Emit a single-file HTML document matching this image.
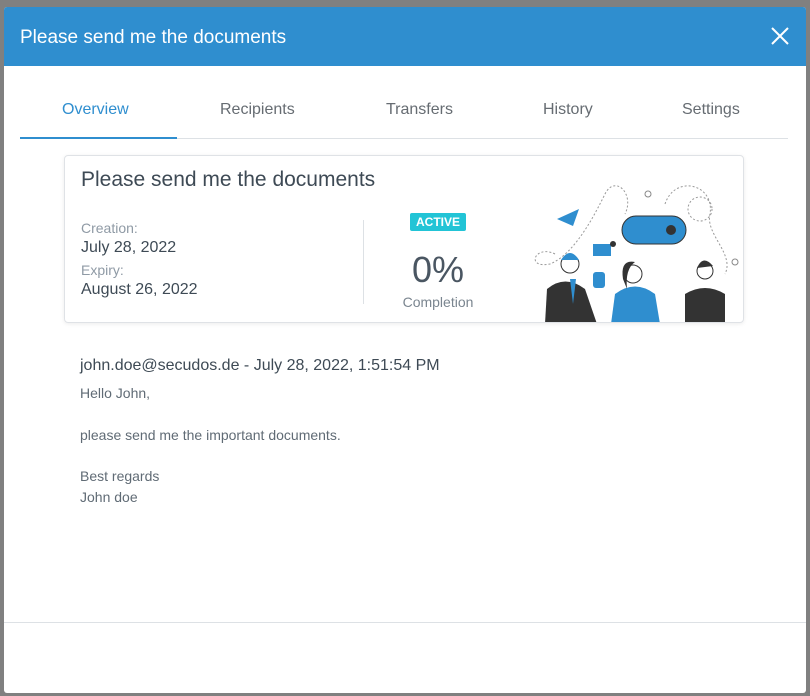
<!DOCTYPE html>
<html><head><style>
*{box-sizing:border-box;margin:0;padding:0}
body{width:810px;height:696px;background:#808080;font-family:"Liberation Sans",sans-serif;position:relative;overflow:hidden}
.modal{position:absolute;left:4px;top:7px;width:802px;height:686px;background:#fff;border-radius:3px;overflow:hidden}
.hdr{height:59px;background:#2f8ecf;color:#fff;font-size:19px;padding:20px 0 0 16px}
.x{position:absolute;right:16px;top:19px}
.tabs{position:absolute;top:93px;left:16px;width:768px;height:39px;border-bottom:1px solid #dde1e5;font-size:16px;color:#666c72}
.tabs span{position:absolute;top:1px}
.tabs .a{color:#2f8ecf}
.ul{position:absolute;left:0;bottom:-1px;width:157px;height:2px;background:#2f8ecf}
.card{position:absolute;left:60px;top:148px;width:680px;height:168px;border:1px solid #dfe2e6;border-radius:4px;box-shadow:0 1px 4px rgba(0,0,0,.08);overflow:hidden}
.t{position:absolute;color:#3e4a55}
.l{position:absolute;color:#8f9aa5;font-size:14px}
.badge{position:absolute;left:345px;top:57px;background:#22c4d6;color:#fff;font-size:12px;font-weight:bold;padding:2px 6px;border-radius:2px}
.msg{position:absolute;left:76px;color:#606b75;font-size:14px}
</style></head><body>
<div class="modal">
<div class="hdr">Please send me the documents</div>
<svg class="x" width="20" height="20" viewBox="0 0 20 20"><path d="M2 2L18 18M18 2L2 18" stroke="#fff" stroke-width="2"/></svg>
<div class="tabs">
<span class="a" style="left:42px">Overview</span>
<span style="left:200px">Recipients</span>
<span style="left:366px">Transfers</span>
<span style="left:523px">History</span>
<span style="left:662px">Settings</span>
<div class="ul"></div>
</div>
<div class="card">
<div class="t" style="left:16px;top:12px;font-size:21px">Please send me the documents</div>
<div class="l" style="left:16px;top:64px">Creation:</div>
<div class="t" style="left:16px;top:83px;font-size:16px">July 28, 2022</div>
<div class="l" style="left:16px;top:106px">Expiry:</div>
<div class="t" style="left:16px;top:125px;font-size:16px">August 26, 2022</div>
<div style="position:absolute;left:298px;top:64px;width:1px;height:84px;background:#dde1e5"></div>
<div class="badge">ACTIVE</div>
<div class="t" style="left:333px;top:93px;width:80px;text-align:center;font-size:36px;color:#4a5662">0%</div>
<div class="l" style="left:333px;top:138px;width:80px;text-align:center;color:#7a858f">Completion</div>
<svg style="position:absolute;left:450px;top:18px" width="230" height="150" viewBox="0 0 230 150">
<g fill="none" stroke="#999" stroke-dasharray="2 2"><path d="M40 80C20 70 10 95 35 90C60 80 80 40 90 20C100 0 120 20 110 40"/><path d="M150 30C160 0 200 10 195 40C190 60 220 80 210 100"/><circle cx="185" cy="35" r="12"/></g>
<circle cx="133" cy="20" r="3" fill="none" stroke="#888"/><circle cx="220" cy="88" r="3" fill="none" stroke="#888"/>
<path d="M42 45L64 35L58 52Z" fill="#2f8ecf"/>
<rect x="78" y="70" width="18" height="12" fill="#2f8ecf"/><circle cx="98" cy="70" r="3" fill="#333"/>
<rect x="107" y="42" width="64" height="28" rx="14" fill="#2f8ecf" stroke="#333"/><circle cx="156" cy="56" r="5" fill="#333"/>
<path d="M30 150L32 115Q50 100 70 115L82 150Z" fill="#333"/><circle cx="55" cy="90" r="9" fill="#fff" stroke="#333"/><path d="M46 86Q55 72 64 86Z" fill="#2f8ecf"/><path d="M55 105L58 130L61 105Z" fill="#2f8ecf"/><rect x="78" y="98" width="12" height="16" rx="3" fill="#2f8ecf"/>
<path d="M96 150L100 120Q120 105 140 120L145 150Z" fill="#2f8ecf"/><circle cx="118" cy="100" r="9" fill="#fff" stroke="#333"/><path d="M108 105Q105 85 120 88Q110 95 112 115Z" fill="#333"/>
<path d="M170 150L170 120Q190 108 210 120L210 150Z" fill="#333"/><circle cx="190" cy="97" r="8" fill="#fff" stroke="#333"/><path d="M182 94Q188 80 198 92Z" fill="#333"/>
<line x1="20" y1="149" x2="230" y2="149" stroke="#ccc"/>
</svg>
</div>
<div class="msg" style="top:350px;font-size:16px;color:#3e4a55">john.doe@secudos.de - July 28, 2022, 1:51:54 PM</div>
<div class="msg" style="top:378px">Hello John,</div>
<div class="msg" style="top:420px">please send me the important documents.</div>
<div class="msg" style="top:461px">Best regards</div>
<div class="msg" style="top:482px">John doe</div>
<div style="position:absolute;left:0;top:615px;width:100%;height:1px;background:#dde1e5"></div>
</div>
</body></html>
